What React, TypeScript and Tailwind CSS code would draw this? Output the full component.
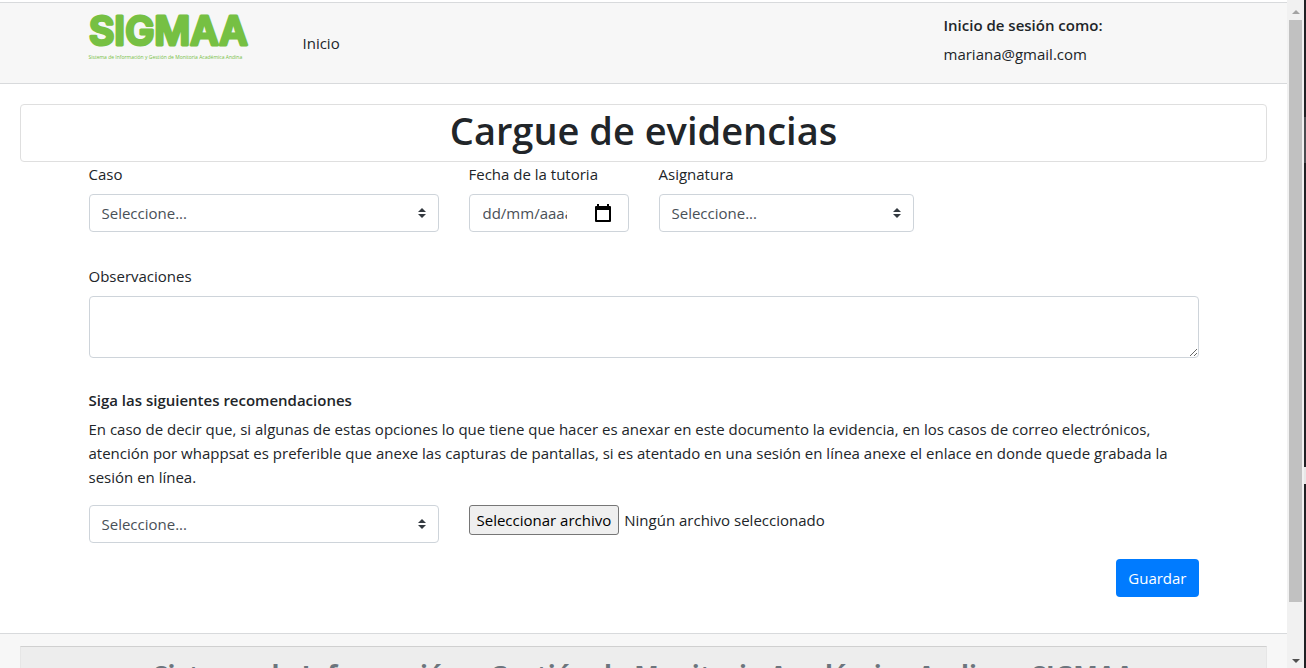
import { useRef, useState } from "react";
import type { ReactNode } from "react";

const control =
  "w-full h-[38px] rounded border border-[#ced4da] bg-white text-[15px] text-[#495057]";

function Field({ id, label, children }: { id: string; label: string; children: ReactNode }) {
  return (
    <div className="px-[15px]">
      <label htmlFor={id} className="mb-2 block leading-6">
        {label}
      </label>
      {children}
    </div>
  );
}

function Select({ id, label }: { id: string; label?: string }) {
  return (
    <div className="grid items-center">
      <select
        id={id}
        aria-label={label}
        className={`${control} col-start-1 row-start-1 appearance-none pr-7 pl-3`}
      >
        <option>Seleccione...</option>
      </select>
      <svg
        viewBox="0 0 4 5"
        className="pointer-events-none col-start-1 row-start-1 mr-[13px] h-[10px] w-2 justify-self-end"
        aria-hidden="true"
      >
        <path fill="#343a40" d="M2 0L0 2h4zm0 5L0 3h4z" />
      </svg>
    </div>
  );
}

function Logo() {
  return (
    <a href="#" className="block w-40 text-[#76c043]">
      <svg viewBox="0 0 160 34" className="block h-[34px] w-40 overflow-visible" aria-hidden="true">
        <text
          x="0"
          y="32"
          fontFamily="Inter, sans-serif"
          fontWeight="600"
          fontSize="39"
          fill="#76c043"
          stroke="#76c043"
          strokeWidth="3"
          strokeLinejoin="round"
        >
          SIGMAA
        </text>
      </svg>
      <span className="mt-[6px] block text-[5px] leading-2 whitespace-nowrap">
        Sistema de Información y Gestión de Monitoria Académica Andina
      </span>
    </a>
  );
}

function FilePicker() {
  const input = useRef<HTMLInputElement>(null);
  const [name, setName] = useState("Ningún archivo seleccionado");
  return (
    <div className="flex items-center gap-[5px] px-[15px] whitespace-nowrap">
      <input
        ref={input}
        type="file"
        aria-label="Archivo de evidencia"
        className="hidden"
        onChange={(e) => setName(e.target.files?.[0]?.name ?? "Ningún archivo seleccionado")}
      />
      <button
        type="button"
        onClick={() => input.current?.click()}
        className="h-[30px] rounded-[3px] border border-[#767676] bg-[#efefef] px-[7px] text-black"
      >
        Seleccionar archivo
      </button>
      <span>{name}</span>
    </div>
  );
}

function Scrollbar() {
  return (
    <div className="flex shrink-0" aria-hidden="true">
      <div className="flex w-[17px] flex-col items-center bg-[#f1f1f1] pt-[10px] pb-[5px]">
        <svg viewBox="0 0 8 4" className="h-1 w-2">
          <path d="M4 0L8 4H0z" fill="#a3a3a3" />
        </svg>
        <div className="mt-[6px] mb-[57px] w-[13px] flex-1 bg-[#c1c1c1]" />
        <svg viewBox="0 0 8 4" className="h-1 w-2">
          <path d="M0 0H8L4 4z" fill="#505050" />
        </svg>
      </div>
      <div className="flex w-[2px] flex-col bg-[#e8e8e8]">
        <div className="flex-[117] bg-[#202124]" />
        <div className="flex-[46] bg-[#4a4c50]" />
        <div className="mb-[17px] flex-[304] bg-[#202124]" />
        <div className="flex-[184] bg-[#202124]" />
      </div>
    </div>
  );
}

export default function App() {
  return (
    <div className="flex h-screen bg-white font-['Open_Sans','Noto_Sans',sans-serif] text-[15px] leading-6 text-[#212529]">
      <div className="min-w-0 flex-1 overflow-y-auto pt-[2px] [scrollbar-width:none]">
        <header className="border-y border-[#d8dadc] bg-[#f7f7f7]">
          <div className="mx-auto grid h-20 max-w-[1140px] grid-cols-12">
            <div className="col-span-9 flex items-start px-[15px] pt-[10px]">
              <Logo />
              <nav className="ml-[54px] pt-[18px]">
                <a href="#">Inicio</a>
              </nav>
            </div>
            <div className="col-span-3 px-[15px] pt-[10px]">
              <p className="mb-[5px] font-semibold">Inicio de sesión como:</p>
              <p>mariana@gmail.com</p>
            </div>
          </div>
        </header>

        <main className="px-5 pt-5">
          <h1 className="rounded border border-[#dfdfdf] pt-[2px] pb-[7px] text-center text-[38px] leading-[47px] font-semibold">
            Cargue de evidencias
          </h1>
          <form className="mx-auto max-w-[1140px]" onSubmit={(e) => e.preventDefault()}>
            <div className="grid grid-cols-12">
              <div className="col-span-4">
                <Field id="caso" label="Caso">
                  <Select id="caso" />
                </Field>
              </div>
              <div className="col-span-2">
                <Field id="fecha" label="Fecha de la tutoria">
                  <div className={`${control} flex items-center pr-[17px] pl-[13px]`}>
                    <input
                      id="fecha"
                      type="text"
                      placeholder="dd/mm/aaaa"
                      className="min-w-0 flex-1 outline-none placeholder:text-[#495057]"
                    />
                    <button type="button" aria-label="Abrir calendario" className="ml-7 shrink-0 text-black">
                      <svg viewBox="0 0 16 18" className="block h-[18px] w-4">
                        <path
                          fill="currentColor"
                          fillRule="evenodd"
                          d="M2 0H4V2H12V0H14V2H15Q16 2 16 3V17Q16 18 15 18H1Q0 18 0 17V3Q0 2 1 2H2ZM2 6V16H14V6Z"
                        />
                      </svg>
                    </button>
                  </div>
                </Field>
              </div>
              <div className="col-span-3">
                <Field id="asignatura" label="Asignatura">
                  <Select id="asignatura" />
                </Field>
              </div>
            </div>

            <div className="mt-8">
              <Field id="observaciones" label="Observaciones">
                <textarea
                  id="observaciones"
                  rows={2}
                  className="block h-[62px] w-full resize-y rounded border border-[#ced4da] px-3 py-[6px] text-[#495057]"
                />
              </Field>
            </div>

            <section className="mt-[30px] px-[15px]">
              <h2 className="mb-[5px] font-semibold">Siga las siguientes recomendaciones</h2>
              <p>
                En caso de decir que, si algunas de estas opciones lo que tiene que hacer es anexar en este
                documento la evidencia, en los casos de correo electrónicos, atención por whappsat es
                preferible que anexe las capturas de pantallas, si es atentado en una sesión en línea anexe
                el enlace en donde quede grabada la sesión en línea.
              </p>
            </section>

            <div className="mt-4 grid grid-cols-12 items-start">
              <div className="col-span-4 px-[15px]">
                <Select id="tipo" label="Tipo de evidencia" />
              </div>
              <div className="col-span-5">
                <FilePicker />
              </div>
            </div>

            <div className="mt-4 flex justify-end px-[15px]">
              <button type="submit" className="h-[38px] rounded bg-[#007bff] px-3 text-white">
                Guardar
              </button>
            </div>
          </form>
        </main>

        <footer className="mt-9 border-t border-[#d8dadc] bg-[#f7f7f7] px-5 py-3">
          <div className="border border-[#e6e6e6] border-t-[#d0d0d0] bg-[#ededed] py-3 text-center text-[26px] leading-8 font-bold text-[#6c757d]">
            Sistema de Información y Gestión de Monitoria Académica Andina - SIGMAA
          </div>
        </footer>
      </div>
      <Scrollbar />
    </div>
  );
}
